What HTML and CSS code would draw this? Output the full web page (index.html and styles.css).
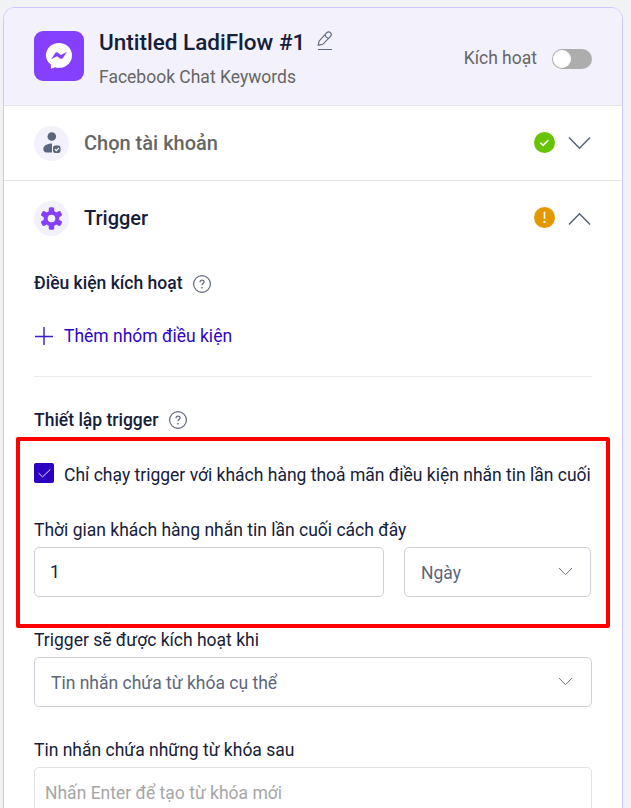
FILE: index.html
```html
<!DOCTYPE html>
<html lang="vi">
<head>
<meta charset="utf-8">
<title>LadiFlow</title>
<link rel="stylesheet" href="styles.css">
</head>
<body>
<main class="card">
  <header class="header">
    <div class="logo">
      <svg width="26" height="26" viewBox="0 0 26 26"><path fill="#fff" d="M13 0C5.700 0 0 5.300 0 12.400c0 3.700 1.700 6.900 4.900 9.100v4.200l4.200-1.400c1.200.4 2.500.5 3.900.5 7.300 0 13-5.300 13-12.400S20.300 0 13 0z"/><path fill="#8540ff" d="M5.200 16.300l3.900-6.100c.7-1 1.900-1.200 2.900-.5l3 2.200 5.800-3.100-3.900 6.100c-.7 1-1.900 1.200-2.900.5l-3-2.200z"/></svg>
    </div>
    <div class="heading">
      <div class="title-line">
        <h1 class="title">Untitled LadiFlow #1</h1>
        <svg class="pencil" width="16" height="20" viewBox="0 0 16 20" fill="none" stroke="#606b7d" stroke-width="1.200"><path d="M1.300 14.200l.7-4L9.600 1.900c1.100-1.200 2.700-1.300 3.800-.3s1.200 2.600.1 3.800L5.800 13.300z M8.100 3.500c.3 2.200 1.600 3.500 3.900 3.800"/><path d="M1 18.500h14"/></svg>
      </div>
      <p class="subtitle">Facebook Chat Keywords</p>
    </div>
    <div class="activation"><span class="activation-label">Kích hoạt</span><span class="toggle"></span></div>
  </header>

  <section class="step step-account">
    <span class="step-icon"><svg width="18" height="22" viewBox="0 0 18 22"><circle cx="8.800" cy="4.500" r="4.300" fill="#5a667b"/><path d="M9 11.500c-5 0-8.700 2.400-8.700 5.500 0 1.800 1.300 3.500 3 3.500H9z" fill="#5a667b"/><rect x="10" y="13.500" width="7.500" height="7.500" rx="2.200" fill="#5a667b"/><path d="M11.800 17.200l1.500 1.500 2.700-2.900" fill="none" stroke="#fff" stroke-width="1.200"/></svg></span>
    <h2 class="step-title muted">Chọn tài khoản</h2>
    <svg class="status" width="21" height="21" viewBox="0 0 21 21"><circle cx="10.500" cy="10.500" r="10.500" fill="#66c400"/><path d="M6.300 10.600l2.800 2.700 5.200-5.100" fill="none" stroke="#fff" stroke-width="1.600"/></svg>
    <svg class="arrow" width="23" height="14" viewBox="0 0 23 14"><path d="M1 1.500l10.500 10.700L22 1.500" fill="none" stroke="#56617a" stroke-width="1.500"/></svg>
  </section>

  <section class="step step-trigger">
    <span class="step-icon"><svg width="23" height="23" viewBox="-11.500 -11.500 23 23"><g fill="#8540ff"><circle r="7.800"/><rect x="-2.700" y="-11.200" width="5.400" height="22.400" rx="1.500"/><rect x="-2.700" y="-11.200" width="5.400" height="22.400" rx="1.500" transform="rotate(60)"/><rect x="-2.700" y="-11.200" width="5.400" height="22.400" rx="1.500" transform="rotate(120)"/></g><circle r="3.800" fill="#f3f1fc"/></svg></span>
    <h2 class="step-title">Trigger</h2>
    <svg class="status" width="21" height="21" viewBox="0 0 21 21"><circle cx="10.500" cy="10.500" r="10.500" fill="#e59700"/><path d="M10.500 4.800v7" stroke="#fff" stroke-width="1.600"/><circle cx="10.500" cy="14.900" r="1.200" fill="#fff"/></svg>
    <svg class="arrow" width="23" height="14" viewBox="0 0 23 14"><path d="M1 12.500l10.500-10.700L22 12.500" fill="none" stroke="#56617a" stroke-width="1.500"/></svg>
  </section>

  <div class="body">
    <div class="group-title"><h3 class="label-strong">Điều kiện kích hoạt</h3>
      <svg class="help-low" width="18" height="18" viewBox="0 0 18 18" fill="none" stroke="#606b7d"><circle cx="9" cy="9" r="8.400" stroke-width="1.200"/><path d="M7 7.200c0-1.300.8-2 2-2s2 .7 2 1.800c0 1.500-2 1.500-2 3.300" stroke-width="1.200"/><path d="M9 11.900v1.500" stroke-width="1.400"/></svg>
    </div>
    <div class="add"><svg width="18" height="18" viewBox="0 0 18 18"><path d="M9 0v18M0 9.500h18" stroke="#3d1bc9" stroke-width="1.400"/></svg><span>Thêm nhóm điều kiện</span></div>
    <hr class="divider">
    <div class="group-title"><h3 class="label-strong">Thiết lập trigger</h3>
      <svg width="18" height="18" viewBox="0 0 18 18" fill="none" stroke="#606b7d"><circle cx="9" cy="9" r="8.400" stroke-width="1.200"/><path d="M7 7.200c0-1.300.8-2 2-2s2 .7 2 1.800c0 1.500-2 1.500-2 3.300" stroke-width="1.200"/><path d="M9 11.900v1.500" stroke-width="1.400"/></svg>
    </div>
    <div class="highlight">
      <div class="check-row"><span class="checkbox"><svg width="13" height="9" viewBox="0 0 13 9"><path d="M.7 4.200l3.800 3.700L12.300.5" fill="none" stroke="#fff" stroke-width=".9"/></svg></span><span>Chỉ chạy trigger với khách hàng thoả mãn điều kiện nhắn tin lần cuối</span></div>
      <div class="time-label">Thời gian khách hàng nhắn tin lần cuối cách đây</div>
      <div class="time-row">
        <div class="field number">1</div>
        <div class="field select">Ngày<svg width="15" height="9" viewBox="0 0 15 9"><path d="M1 1l6.500 6.700L14 1" fill="none" stroke="#777" stroke-width="1"/></svg></div>
      </div>
    </div>
    <div>Trigger sẽ được kích hoạt khi</div>
    <div class="field select wide">Tin nhắn chứa từ khóa cụ thể<svg width="15" height="9" viewBox="0 0 15 9"><path d="M1 1l6.500 6.700L14 1" fill="none" stroke="#777" stroke-width="1"/></svg></div>
    <div class="keyword-label">Tin nhắn chứa những từ khóa sau</div>
    <div class="field keywords">Nhấn Enter để tạo từ khóa mới</div>
  </div>
</main>
</body>
</html>
```
FILE: styles.css
```css
* { box-sizing: border-box; }
html { overflow: hidden; }
body {
  margin: 0;
  height: 808px;
  padding: 7px 0 0 3px;
  overflow: hidden;
  background: #f1f2f4;
  color: #15203a;
  font: 400 17.5px/24px Roboto, sans-serif;
}
h1, h2, h3, p { margin: 0; }
svg { display: block; flex: none; }
.card {
  width: 620px;
  height: 830px;
  overflow: hidden;
  background: #fff;
  border: 1px solid #cfc6ff;
  border-radius: 12px;
}
.header {
  display: flex;
  height: 98px;
  padding: 23px 30px 0;
  background: #f3f1fc;
  border-bottom: 1px solid #e3e2e9;
}
.logo {
  display: flex;
  align-items: center;
  justify-content: center;
  width: 50px;
  height: 50px;
  background: #8540ff;
  border-radius: 9px;
}
.heading { margin-left: 15px; }
.title-line { display: flex; height: 24px; }
.title { margin-top: -1px; font-size: 22.5px; line-height: 24px; font-weight: 500; white-space: nowrap; }
.pencil { margin-left: 12px; }
.subtitle { margin-top: 10px; color: #666; }
.activation { display: flex; height: 28px; margin: 14px 0 0 auto; }
.activation-label { margin-top: 1px; color: #666; }
.toggle {
  width: 40px;
  height: 20px;
  margin: 4px 0 0 15px;
  padding: 1px;
  background: #adadad;
  border-radius: 10px;
}
.toggle::before {
  content: "";
  display: block;
  width: 18px;
  height: 18px;
  background: #fff;
  border-radius: 50%;
}
.step { display: flex; align-items: center; height: 75px; padding: 0 31px 0 30px; }
.step-account { border-bottom: 1px solid #e3e3e6; }
.step-trigger .step-title { margin-top: -2px; }
.step-icon {
  display: flex;
  align-items: center;
  justify-content: center;
  width: 35px;
  height: 35px;
  background: #f3f1fc;
  border-radius: 50%;
}
.step-title { margin-left: 15px; font-size: 20px; font-weight: 500; }
.muted { color: #666; }
.status { margin-left: auto; margin-top: -2px; }
.arrow { margin-left: 13px; }
.body { padding: 15px 30px 0; }
.group-title { display: flex; align-items: center; gap: 11px; height: 24px; }
.help-low { margin-top: 2px; }
.label-strong { font-size: 17.5px; font-weight: 500; }
.add { display: flex; align-items: center; gap: 11px; margin: 29px 0 0 1px; color: #2d06c4; }
.divider { height: 1px; margin: 28px 0 31px; border: 0; background: #ebebed; }
.highlight {
  height: 191px;
  margin: 5px -18px 0;
  padding: 22px 14px 0;
  border: 4px solid #ff0000;
  border-radius: 2px;
}
.check-row { display: flex; gap: 10px; white-space: nowrap; }
.checkbox {
  display: flex;
  align-items: center;
  justify-content: center;
  width: 20px;
  height: 20px;
  background: #2b00c0;
  border-radius: 2px;
}
.time-label { margin-top: 31px; }
.time-row { display: flex; gap: 20px; margin: 5px 1px 0 0; }
.field {
  display: flex;
  align-items: center;
  height: 50px;
  padding: 0 16px;
  border: 1px solid #cfd0d8;
  border-radius: 5px;
}
.number { width: 350px; padding-left: 15px; }
.select { flex: 1; justify-content: space-between; padding: 2px 17px 0 16px; color: #5d667b; }
.select svg { margin-top: -4px; }
.wide { margin-top: 5px; padding-right: 18px; }
.keyword-label { margin-top: 31px; }
.keywords { margin-top: 5px; padding: 2px 10px 0; border-color: #e2e2e5; color: #a6a6a6; }
```
